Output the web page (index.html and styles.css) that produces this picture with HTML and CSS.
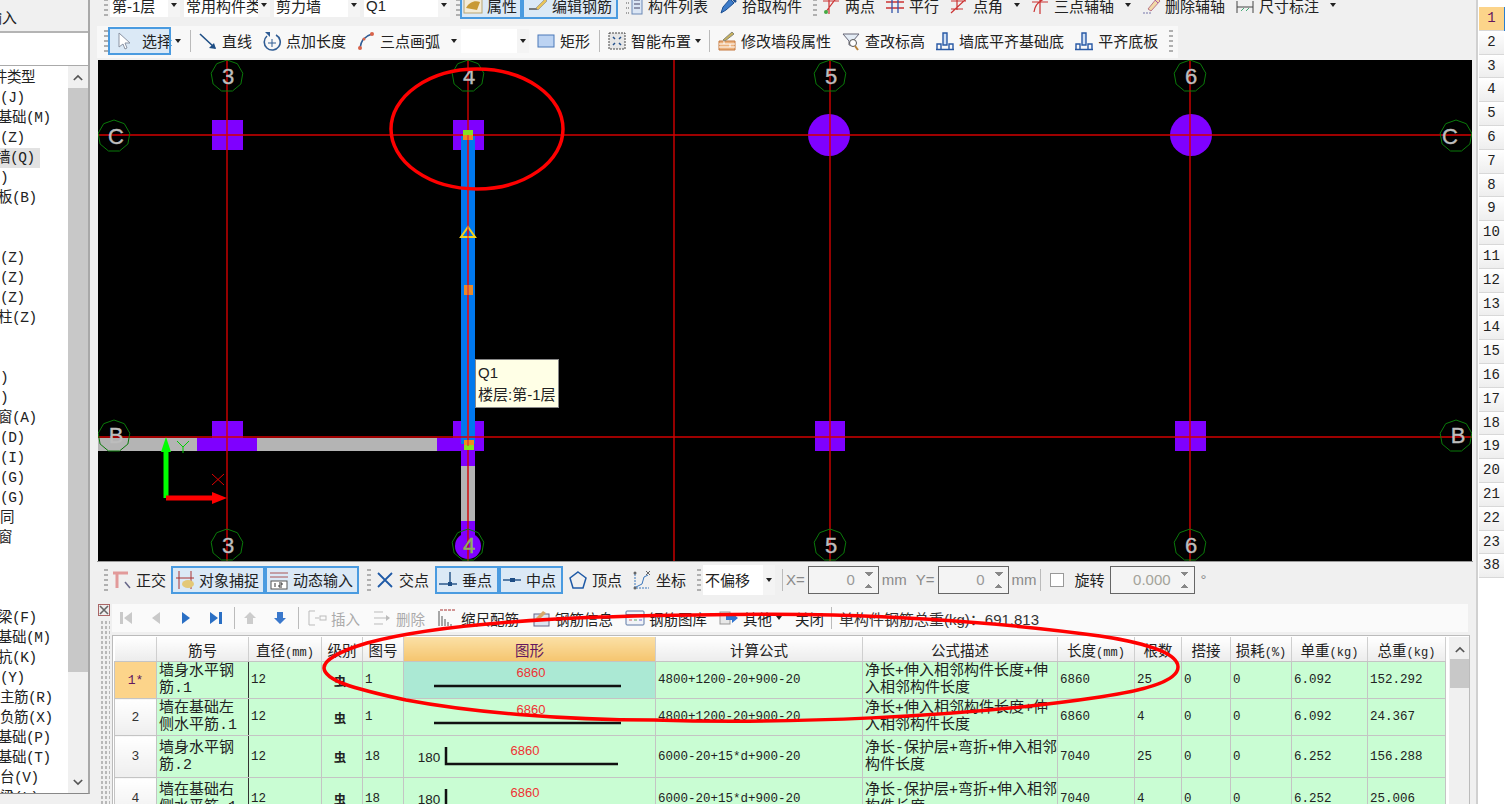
FILE: index.html
```html
<!DOCTYPE html>
<html>

<head>
    <meta charset="utf-8">
    <title>钢筋编辑</title>
    <link rel="stylesheet" href="styles.css">
</head>

<body>
    <div class="page">
        <!-- 左侧构件树 -->
        <div class="side">
            <div class="side-btn">输入</div>
            <div class="side-blank"></div>
            <div class="side-list">
                <ul class="tree">
                    <li class="cut6">件类型</li>
                    <li>(J)</li>
                    <li class="cut2">基础(M)</li>
                    <li>(Z)</li>
                    <li class="cut4 on">墙(Q)</li>
                    <li>)</li>
                    <li class="cut2">板(B)</li>
                    <li></li>
                    <li></li>
                    <li>(Z)</li>
                    <li>(Z)</li>
                    <li>(Z)</li>
                    <li class="cut2">柱(Z)</li>
                    <li></li>
                    <li></li>
                    <li>)</li>
                    <li>)</li>
                    <li class="cut2">窗(A)</li>
                    <li>(D)</li>
                    <li>(I)</li>
                    <li>(G)</li>
                    <li>(G)</li>
                    <li>同</li>
                    <li class="cut2">窗</li>
                    <li></li>
                    <li></li>
                    <li></li>
                    <li class="cut2">梁(F)</li>
                    <li class="cut2">基础(M)</li>
                    <li class="cut2">抗(K)</li>
                    <li>(Y)</li>
                    <li>主筋(R)</li>
                    <li>负筋(X)</li>
                    <li class="cut2">基础(P)</li>
                    <li class="cut2">基础(T)</li>
                    <li>台(V)</li>
                    <li>梁(L)</li>
                </ul>
                <div class="vbar">
                    <svg class="vbar-up" viewBox="0 0 12 8"><path d="M1 7l5-5 5 5" fill="none" stroke="#555" stroke-width="2"/></svg>
                    <div class="vbar-thumb"></div>
                    <svg class="vbar-down" viewBox="0 0 12 8"><path d="M1 1l5 5 5-5" fill="none" stroke="#555" stroke-width="2"/></svg>
                </div>
            </div>
        </div>

        <div class="main">
            <!-- 第一排工具条 -->
            <div class="bar bar-top">
                <i class="grip g2"></i>
                <div class="combo c70"><span>第-1层</span><b></b></div>
                <div class="combo c86"><span>常用构件类</span><b></b></div>
                <div class="combo c86"><span>剪力墙</span><b></b></div>
                <div class="combo c86"><span>Q1</span><b></b></div>
                <i class="grip g0"></i>
                <div class="tool active t-attr">
                    <svg viewBox="0 0 20 20"><rect x="1" y="2" width="18" height="16" fill="#f3ecd8" stroke="#b9a675"/><path d="M3 13c3-6 9-8 14-6l-3 8z" fill="#c89a35"/></svg>属性
                </div>
                <div class="tool active t-edit">
                    <svg viewBox="0 0 20 20"><path d="M1 14h8l9-9" fill="none" stroke="#555" stroke-width="1.5"/><path d="M8 13l9-9 2 2-9 9z" fill="#e8c45a" stroke="#888" stroke-width=".6"/></svg>编辑钢筋
                </div>
                <div class="tool">
                    <svg viewBox="0 0 20 20"><path d="M2 3h3M2 8h3M2 13h3M2 18h3" stroke="#555" stroke-dasharray="1 1"/><rect x="8" y="1" width="10" height="18" fill="#dbe6f5" stroke="#6a88b5"/><path d="M10 5h6M10 9h6M10 13h6" stroke="#446"/></svg>构件列表
                </div>
                <div class="tool">
                    <svg viewBox="0 0 20 20"><path d="M3 18l2-6 7-8 4 4-8 7z" fill="#3d7cc9" stroke="#1d4f92"/><path d="M13 2l5 5" stroke="#1d4f92" stroke-width="2.5"/></svg>拾取构件
                </div>
                <i class="grip"></i>
                <div class="tool">
                    <svg viewBox="0 0 20 20"><path d="M2 6h16M8 1v18M16 2L4 18" fill="none" stroke="#c33" stroke-width="1.2"/><circle cx="5" cy="17" r="2" fill="#4a4"/><circle cx="15" cy="3" r="2" fill="#4a4"/></svg>两点
                </div>
                <div class="tool">
                    <svg viewBox="0 0 20 20"><path d="M1 7h18M1 13h18" stroke="#c33" stroke-width="1.3"/><path d="M7 2v16M13 2v16" stroke="#35a" stroke-width="1.3"/></svg>平行
                </div>
                <div class="tool drop">
                    <svg viewBox="0 0 20 20"><path d="M2 6h15M8 1v14M2 18L17 4M2 14h12" fill="none" stroke="#c33" stroke-width="1.2"/></svg>点角<b></b>
                </div>
                <div class="tool drop">
                    <svg viewBox="0 0 20 20"><path d="M2 7h16M10 1v18M4 17c1-8 6-12 13-14" fill="none" stroke="#c33" stroke-width="1.2"/></svg>三点辅轴<b></b>
                </div>
                <div class="tool">
                    <svg viewBox="0 0 20 20"><path d="M2 18h8" stroke="#77a" stroke-dasharray="2 1"/><path d="M7 14L16 3l3 3-9 10z" fill="#f1d9a6" stroke="#b78"/><path d="M14 5l3 3" stroke="#a5a"/></svg>删除辅轴
                </div>
                <div class="tool drop">
                    <svg viewBox="0 0 20 20"><path d="M2 6v12M18 6v12M2 12h16" stroke="#444"/><path d="M6 16l3-3M11 16l3-3" stroke="#4a7"/></svg>尺寸标注<b></b>
                </div>
            </div>

            <!-- 第二排工具条 -->
            <div class="bar bar-draw">
                <div class="draw-left">
                    <i class="grip g0"></i>
                    <div class="tool active t-select">
                        <svg viewBox="0 0 20 20"><path d="M5 2v14l4-3 2 5 2-1-2-5h5z" fill="#fff" stroke="#8a93a3"/></svg>选择
                    </div>
                    <b class="caret solo"></b>
                    <i class="sep"></i>
                    <div class="tool">
                        <svg viewBox="0 0 20 20"><path d="M2 3l15 14" stroke="#1e4e85" stroke-width="1.6"/><path d="M18 18l-7-1 5-5z" fill="#1e4e85"/></svg>直线
                    </div>
                    <div class="tool">
                        <svg viewBox="0 0 20 20"><path d="M5 5a8 8 0 1 0 9-1" fill="none" stroke="#2f5c94" stroke-width="1.6"/><path d="M3 1h5v5z" fill="#2f5c94"/><path d="M10 8v8M6 12h8" stroke="#2f5c94"/></svg>点加长度
                    </div>
                    <div class="tool drop">
                        <svg viewBox="0 0 20 20"><path d="M4 17C5 9 9 5 16 3" fill="none" stroke="#2f5c94" stroke-width="1.6"/><circle cx="4" cy="17" r="2" fill="#d9634a"/><circle cx="16" cy="3" r="2" fill="#d9634a"/><circle cx="8" cy="8" r="1.5" fill="#d9634a"/></svg>三点画弧<b></b>
                    </div>
                    <div class="combo blank"><span></span><b></b></div>
                    <div class="tool">
                        <svg viewBox="0 0 20 20"><rect x="2" y="4" width="16" height="12" fill="#bcd3f2" stroke="#4a78b8"/></svg>矩形
                    </div>
                    <i class="sep"></i>
                    <div class="tool drop tight">
                        <svg viewBox="0 0 20 20"><rect x="2" y="2" width="16" height="16" fill="#e6e6e6" stroke="#444" stroke-dasharray="2 1"/><path d="M6 6l2 2M14 6l-2 2M6 14l2-2M14 14l-2-2" stroke="#24518d" stroke-width="1.5"/></svg>智能布置<b></b>
                    </div>
                    <i class="sep"></i>
                    <div class="tool">
                        <svg viewBox="0 0 20 20"><path d="M2 10h16v9H2z" fill="#ecb27e" stroke="#c5793f"/><path d="M2 13h16M2 16h16M7 10v3M13 13v3" stroke="#fff"/><path d="M6 9l9-8 2 2-9 7z" fill="#c9b25d" stroke="#887"/></svg>修改墙段属性
                    </div>
                    <div class="tool">
                        <svg viewBox="0 0 20 20"><path d="M2 3h16l-6 7v4H8v-4z" fill="#e4ecf5" stroke="#667"/><circle cx="12" cy="12" r="3.5" fill="#fff" stroke="#555"/><path d="M14 15l3 4" stroke="#b78238" stroke-width="2"/></svg>查改标高
                    </div>
                    <div class="tool">
                        <svg viewBox="0 0 20 20"><path d="M8 2h4v12H8z" fill="#cfe0f5" stroke="#2859a5" stroke-width="1.4"/><path d="M2 18v-5h4v5M14 18v-5h4v5M1 18.500h18" fill="none" stroke="#2859a5" stroke-width="1.4"/></svg>墙底平齐基础底
                    </div>
                    <div class="tool">
                        <svg viewBox="0 0 20 20"><path d="M8 2h4v12H8z" fill="#cfe0f5" stroke="#2859a5" stroke-width="1.4"/><path d="M2 18v-5h4v5M14 18v-5h4v5M1 18.500h18" fill="none" stroke="#2859a5" stroke-width="1.4"/></svg>平齐底板
                    </div>
                    <i class="grip"></i>
                </div>
            </div>

            <!-- 绘图区 -->
            <div class="canvas">
                <svg class="cad" viewBox="98 60 1374 501">
                    <defs>
                        <polygon id="gon" points="0,-16 10.300,-12.300 15.800,-2.800 13.900,8 5.500,15 -5.500,15 -13.900,8 -15.800,-2.800 -10.300,-12.300"/>
                    </defs>
                    <!-- 墙 -->
                    <rect class="wall" x="98" y="438" width="370" height="13"/>
                    <rect class="wall" x="461" y="451" width="14" height="80"/>
                    <!-- 柱 -->
                    <g class="col">
                        <rect x="212" y="120" width="31" height="30"/>
                        <rect x="453" y="120" width="31" height="30"/>
                        <circle cx="829" cy="135" r="21"/>
                        <circle cx="1191" cy="135" r="21"/>
                        <rect x="212" y="421" width="31" height="18"/>
                        <rect x="197" y="438" width="60" height="13"/>
                        <rect x="453" y="421" width="31" height="30"/>
                        <rect x="437" y="438" width="20" height="13"/>
                        <rect x="461" y="451" width="14" height="15"/>
                        <rect x="461" y="521" width="14" height="24"/>
                        <circle cx="468" cy="546" r="13"/>
                        <rect x="815" y="421" width="30" height="30"/>
                        <rect x="1175" y="421" width="31" height="30"/>
                    </g>
                    <rect x="461" y="136" width="14" height="308" fill="#0078ee"/>
                    <!-- 轴线 -->
                    <path class="axis" d="M227 60V561M468 60V561M674 60V561M830 60V561M1190 60V561M98 135H1472M98 437H1472"/>
                    <!-- 轴号 -->
                    <g class="bub">
                        <use href="#gon" x="227" y="76"/>
                        <use href="#gon" x="468" y="76"/>
                        <use href="#gon" x="830" y="76"/>
                        <use href="#gon" x="1190" y="76"/>
                        <use href="#gon" x="227" y="545"/>
                        <use href="#gon" x="468" y="545"/>
                        <use href="#gon" x="830" y="545"/>
                        <use href="#gon" x="1190" y="545"/>
                        <use href="#gon" x="114" y="136"/>
                        <use href="#gon" x="1456" y="136"/>
                        <use href="#gon" x="114" y="436"/>
                        <use href="#gon" x="1456" y="436"/>
                    </g>
                    <g class="bub-txt">
                        <text x="228" y="84">3</text>
                        <text x="469" y="84">4</text>
                        <text x="831" y="84">5</text>
                        <text x="1191" y="84">6</text>
                        <text x="228" y="553">3</text>
                        <text x="469" y="553" class="dim">4</text>
                        <text x="831" y="553">5</text>
                        <text x="1191" y="553">6</text>
                        <text x="116" y="144">C</text>
                        <text x="1450" y="144">C</text>
                        <text x="116" y="443">B</text>
                        <text x="1458" y="443">B</text>
                    </g>
                    <!-- 夹点 -->
                    <rect x="463" y="130" width="10" height="5" fill="#86e020"/>
                    <rect x="463" y="135" width="10" height="5" fill="#f08a1c"/>
                    <rect x="464" y="285" width="9" height="10" fill="#e8892a"/>
                    <path d="M468 227l7 10h-14z" fill="none" stroke="#f2d21c" stroke-width="2"/>
                    <rect x="464" y="440" width="10" height="5" fill="#f08a1c"/>
                    <rect x="464" y="445" width="10" height="5" fill="#86e020"/>
                    <path d="M468 135V446" stroke="#d9183a" stroke-width="1"/>
                    <!-- 坐标系 -->
                    <path d="M166 498V448" stroke="#00ff00" stroke-width="5"/>
                    <path d="M166 437l-5 15h10z" fill="#00ff00"/>
                    <path d="M166 498H213" stroke="#ff0000" stroke-width="5"/>
                    <path d="M227 498l-15-6v12z" fill="#ff0000"/>
                    <path d="M177 441l6 6 6-6M183 447v6" fill="none" stroke="#00d000"/>
                    <path d="M212 474l12 11M224 474l-12 11" stroke="#e00000"/>
                </svg>
                <div class="tip">Q1<br>楼层:第-1层</div>
            </div>

            <!-- 捕捉工具条 -->
            <div class="bar bar-snap">
                <i class="grip"></i>
                <div class="tool m4">
                    <svg viewBox="0 0 20 20"><path d="M1 3h15M5 3v15" stroke="#e29a9a" stroke-width="3"/><path d="M13 12l5 6" stroke="#668" stroke-width="1.5"/></svg>正交
                </div>
                <div class="tool active t-snap">
                    <svg viewBox="0 0 20 20"><path d="M4 1v18M16 1v18M1 8h18" stroke="#a33"/><ellipse cx="13" cy="14" rx="6" ry="4" fill="#e3c877"/></svg>对象捕捉
                </div>
                <div class="tool active t-snap m6">
                    <svg viewBox="0 0 20 20"><path d="M1 3h18M1 7h18" stroke="#a55"/><rect x="2" y="11" width="16" height="8" fill="#fff" stroke="#555"/><path d="M6 13v4M10 13h3v2h-3v2h3" fill="none" stroke="#333"/></svg>动态输入
                </div>
                <i class="grip"></i>
                <div class="tool m5">
                    <svg viewBox="0 0 20 20"><path d="M3 3l14 14M17 3L3 17" stroke="#1f5aa6" stroke-width="1.8"/></svg>交点
                </div>
                <div class="tool active t-pt">
                    <svg viewBox="0 0 20 20"><path d="M1 14h18" stroke="#1e4e85" stroke-width="1.4"/><path d="M12 2v12" stroke="#1e4e85" stroke-width="1.4"/><rect x="10" y="12" width="4" height="4" fill="#1e4e85"/></svg>垂点
                </div>
                <div class="tool active t-pt m4">
                    <svg viewBox="0 0 20 20"><path d="M1 10h18" stroke="#1e4e85" stroke-width="1.4"/><rect x="8" y="8" width="5" height="4" fill="#1e4e85"/></svg>中点
                </div>
                <div class="tool">
                    <svg viewBox="0 0 20 20"><path d="M10 2l8 6-3 10H5L2 8z" fill="none" stroke="#1f5aa6" stroke-width="1.5"/></svg>顶点
                </div>
                <div class="tool">
                    <svg viewBox="0 0 20 20"><path d="M3 4v14h14" fill="none" stroke="#3a76bb" stroke-dasharray="2 1"/><path d="M4 17l6-3 2-7 4-2" fill="none" stroke="#3a76bb"/><path d="M14 1l4 4M18 1l-4 4" stroke="#666"/><circle cx="3" cy="3" r="1.500" fill="#666"/><circle cx="3" cy="18" r="1.500" fill="#666"/></svg>坐标
                </div>
                <i class="grip g2"></i>
                <div class="combo c72"><span>不偏移</span><b></b></div>
                <i class="sep"></i>
                <span class="dim-txt lx">X=</span>
                <div class="spin s71"><span>0</span><em></em></div>
                <span class="dim-txt">mm</span>
                <span class="dim-txt ly">Y=</span>
                <div class="spin s71"><span>0</span><em></em></div>
                <span class="dim-txt">mm</span>
                <i class="sep"></i>
                <i class="check"></i>
                <span class="rot">旋转</span>
                <div class="spin s85"><span class="amber">0.000</span><em></em></div>
                <span class="dim-txt deg">°</span>
            </div>

            <!-- 钢筋明细 -->
            <div class="detail">
                <div class="detail-grip">
                    <svg class="x-ic" viewBox="0 0 12 12"><rect x=".5" y=".5" width="11" height="11" fill="#eee" stroke="#a66"/><path d="M2 2l8 8M10 2l-8 8" stroke="#666" stroke-width="1.6"/></svg>
                    <div class="dots"></div>
                </div>
                <div class="detail-body">
                    <div class="bar-rebar">
                        <svg class="nav" viewBox="0 0 16 16"><path d="M2 2h3v12H2zM14 2v12L6 8z" fill="#c9c9c9"/></svg>
                        <svg class="nav" viewBox="0 0 16 16"><path d="M12 2v12L4 8z" fill="#c9c9c9"/></svg>
                        <svg class="nav" viewBox="0 0 16 16"><path d="M4 2v12l8-6z" fill="#2a6fc4"/></svg>
                        <svg class="nav" viewBox="0 0 16 16"><path d="M2 2v12l8-6zM11 2h3v12h-3z" fill="#2a6fc4"/></svg>
                        <i class="sep"></i>
                        <svg class="nav" viewBox="0 0 16 16"><path d="M8 2l6 6h-3v6H5V8H2z" fill="#ccc"/></svg>
                        <svg class="nav" viewBox="0 0 16 16"><path d="M8 14l6-6h-3V2H5v6H2z" fill="#3a78cc"/></svg>
                        <i class="sep"></i>
                        <div class="tool off"><svg viewBox="0 0 20 20"><path d="M2 3h6M2 17h6M2 3v14M8 10h4" stroke="#bbb" fill="none"/><rect x="13" y="8" width="6" height="4" fill="none" stroke="#bbb"/></svg>插入</div>
                        <div class="tool off"><svg viewBox="0 0 20 20"><path d="M2 4h9M2 10h12M2 16h9" stroke="#bbb"/><path d="M14 7l4 3-4 3z" fill="#bbb"/></svg>删除</div>
                        <div class="tool"><svg viewBox="0 0 20 20"><path d="M2 3v15M5 8v10M8 11v7M11 14v4M14 16v2" stroke="#555"/><path d="M3 2h15" stroke="#a33" stroke-dasharray="3 1"/></svg>缩尺配筋</div>
                        <div class="tool"><svg viewBox="0 0 20 20"><rect x="3" y="6" width="15" height="12" fill="#dbe5f2" stroke="#668"/><path d="M4 11l8-8 3 2-8 8z" fill="#d8a86a"/></svg>钢筋信息</div>
                        <div class="tool"><svg viewBox="0 0 20 20"><rect x="1" y="3" width="18" height="14" rx="1" fill="#f1f3f8" stroke="#5c78a6"/><path d="M1 7h18" stroke="#5c78a6" stroke-width="2"/><path d="M4 12h3" stroke="#c66"/><path d="M9 12h3" stroke="#6a6"/><path d="M14 12h3" stroke="#66c"/></svg>钢筋图库</div>
                        <div class="tool drop tight"><svg viewBox="0 0 20 20"><rect x="1" y="4" width="10" height="12" fill="#e8e8e8" stroke="#999"/><path d="M7 8h6V5l6 5-6 5v-3H7z" fill="#2f74d0"/></svg>其他<b></b></div>
                        <div class="tool">关闭</div>
                        <i class="sep"></i>
                        <span class="total">单构件钢筋总重(kg)：691.813</span>
                    </div>
                    <div class="grid-wrap">
                        <table class="rebar">
                            <colgroup>
                                <col class="c0"><col class="c1"><col class="c2"><col class="c3"><col class="c4"><col class="c5"><col class="c6"><col class="c7"><col class="c8"><col class="c9"><col class="c10"><col class="c11"><col class="c12"><col class="c13">
                            </colgroup>
                            <thead>
                                <tr>
                                    <th></th><th>筋号</th><th>直径<small>(mm)</small></th><th>级别</th><th>图号</th><th class="cur">图形</th><th>计算公式</th><th>公式描述</th><th>长度<small>(mm)</small></th><th>根数</th><th>搭接</th><th>损耗<small>(%)</small></th><th>单重<small>(kg)</small></th><th>总重<small>(kg)</small></th>
                                </tr>
                            </thead>
                            <tbody>
                                <tr class="r37">
                                    <td class="no sel">1*</td>
                                    <td class="name">墙身水平钢<br>筋.1</td>
                                    <td>12</td><td class="mid">虫</td><td>1</td>
                                    <td class="shape picked"><svg viewBox="0 0 251 36"><text x="127" y="15">6860</text><path d="M30 24H217" stroke="#111" stroke-width="2.500"/></svg></td>
                                    <td>4800+1200-20+900-20</td>
                                    <td class="name">净长+伸入相邻构件长度+伸<br>入相邻构件长度</td>
                                    <td>6860</td><td>25</td><td>0</td><td>0</td><td>6.092</td><td>152.292</td>
                                </tr>
                                <tr class="r37">
                                    <td class="no">2</td>
                                    <td class="name">墙在基础左<br>侧水平筋.1</td>
                                    <td>12</td><td class="mid">虫</td><td>1</td>
                                    <td class="shape"><svg viewBox="0 0 251 36"><text x="127" y="15">6860</text><path d="M30 24H217" stroke="#111" stroke-width="2.500"/></svg></td>
                                    <td>4800+1200-20+900-20</td>
                                    <td class="name">净长+伸入相邻构件长度+伸<br>入相邻构件长度</td>
                                    <td>6860</td><td>4</td><td>0</td><td>0</td><td>6.092</td><td>24.367</td>
                                </tr>
                                <tr class="r42">
                                    <td class="no">3</td>
                                    <td class="name">墙身水平钢<br>筋.2</td>
                                    <td>12</td><td class="mid">虫</td><td>18</td>
                                    <td class="shape"><svg viewBox="0 0 251 41"><text x="121" y="19">6860</text><text class="len" x="25" y="26">180</text><path d="M42 11V28H214" fill="none" stroke="#111" stroke-width="2.500"/></svg></td>
                                    <td>6000-20+15*d+900-20</td>
                                    <td class="name">净长-保护层+弯折+伸入相邻<br>构件长度</td>
                                    <td>7040</td><td>25</td><td>0</td><td>0</td><td>6.252</td><td>156.288</td>
                                </tr>
                                <tr class="r42">
                                    <td class="no">4</td>
                                    <td class="name">墙在基础右<br>侧水平筋.1</td>
                                    <td>12</td><td class="mid">虫</td><td>18</td>
                                    <td class="shape"><svg viewBox="0 0 251 41"><text x="121" y="19">6860</text><text class="len" x="25" y="26">180</text><path d="M42 11V28H214" fill="none" stroke="#111" stroke-width="2.500"/></svg></td>
                                    <td>6000-20+15*d+900-20</td>
                                    <td class="name">净长-保护层+弯折+伸入相邻<br>构件长度</td>
                                    <td>7040</td><td>4</td><td>0</td><td>0</td><td>6.252</td><td>25.006</td>
                                </tr>
                            </tbody>
                        </table>
                        <div class="gbar">
                            <svg viewBox="0 0 12 8"><path d="M1 7l5-5 5 5" fill="none" stroke="#555" stroke-width="2"/></svg>
                            <div class="gbar-thumb"></div>
                        </div>
                    </div>
                </div>
            </div>
        </div>

        <!-- 右侧楼层页签 -->
        <div class="rail">
            <div class="tab on">1</div>
            <div class="tab">2</div>
            <div class="tab">3</div>
            <div class="tab">4</div>
            <div class="tab">5</div>
            <div class="tab">6</div>
            <div class="tab">7</div>
            <div class="tab">8</div>
            <div class="tab">9</div>
            <div class="tab">10</div>
            <div class="tab">11</div>
            <div class="tab">12</div>
            <div class="tab">13</div>
            <div class="tab">14</div>
            <div class="tab">15</div>
            <div class="tab">16</div>
            <div class="tab">17</div>
            <div class="tab">18</div>
            <div class="tab">19</div>
            <div class="tab">20</div>
            <div class="tab">21</div>
            <div class="tab">22</div>
            <div class="tab">23</div>
            <div class="tab">38</div>
        </div>

        <!-- 手画的红圈 -->
        <svg class="marks" viewBox="0 0 1505 804">
            <ellipse cx="477" cy="129" rx="86" ry="60"/>
            <path d="M600 617C520 620 430 626 367 643C340 651 324 660 324 668C325 680 350 688 406 700C470 712 560 720 654 720C780 724 960 718 1100 697C1140 691 1178 682 1178 667C1178 652 1140 642 1100 636C1000 622 900 617 833 615C750 613 680 615 600 617Z"/>
        </svg>
    </div>
</body>

</html>
```

FILE: styles.css
```css
html,
body {
    margin: 0;
    padding: 0;
    height: 100%;
    overflow: hidden;
}

body {
    background: #f0f0f0;
    color: #222;
    font-family: "Liberation Sans", "Noto Sans CJK SC", sans-serif;
    font-size: 15px;
}

.page {
    position: relative;
    display: flex;
    width: 1505px;
    height: 804px;
    overflow: hidden;
}

/* 左侧 */
.side {
    width: 90px;
    flex: none;
    display: flex;
    flex-direction: column;
    border-right: 2px solid #a8a8a8;
    border-bottom: 1px solid #888;
    box-sizing: border-box;
    height: 794px;
    background: #fff;
}

.side-btn {
    height: 31px;
    line-height: 36px;
    margin-left: -13px;
    background: #f0f0f0;
    border-bottom: 2px solid #b4b4b4;
}

.side-blank {
    height: 32px;
    border-bottom: 1px solid #aaa;
}

.side-list {
    flex: 1;
    display: flex;
    overflow: hidden;
}

.tree {
    list-style: none;
    margin: 0;
    padding: 2px 0 0;
    flex: 1;
    min-width: 0;
    overflow: hidden;
    font-family: "Liberation Mono", "Noto Sans CJK SC", monospace;
    font-size: 14.500px;
    letter-spacing: -0.500px;
    line-height: 20px;
    white-space: nowrap;
}

.tree li {
    height: 20px;
}

.tree .cut2 {
    text-indent: -2px;
}

.tree .cut4 {
    text-indent: -4px;
}

.tree .cut6 {
    text-indent: -7px;
}

.tree .on {
    background: #e2e2e2;
    width: 40px;
}

.vbar {
    width: 20px;
    flex: none;
    background: #f0f0f0;
    position: relative;
}

.vbar-up {
    display: block;
    width: 10px;
    height: 7px;
    margin: 8px auto 7px;
}

.vbar-thumb {
    height: 584px;
    background: #c8c8c8;
}

.vbar-down {
    position: absolute;
    left: 5px;
    bottom: 7px;
    width: 10px;
    height: 7px;
}

/* 中间 */
.main {
    width: 1376px;
    margin-left: 7px;
    flex: none;
    display: flex;
    flex-direction: column;
    position: relative;
}

.bar {
    display: flex;
    align-items: center;
    white-space: nowrap;
    flex: none;
}

.bar-top {
    height: 24px;
    margin-top: -7px;
    padding-left: 5px;
}

.bar-draw {
    align-items: flex-start;
    height: 34px;
    margin-top: 9px;
}

.draw-left {
    display: flex;
    align-items: center;
    height: 32px;
    width: 1081px;
    padding: 0 0 3px 5px;
    box-sizing: border-box;
    background: #f8f8f8;
}

.grip {
    display: block;
    flex: none;
    width: 4px;
    height: 22px;
    margin: 0 3px 0 2px;
    background: repeating-linear-gradient(#b0b0b0 0, #b0b0b0 2px, transparent 2px, transparent 5px);
}

.grip.g0 {
    margin-right: 0;
}

.grip.g2 {
    margin-right: 2px;
}

.sep {
    display: block;
    flex: none;
    width: 1px;
    height: 22px;
    margin: 0 6px 0 0;
    background: #bbb;
}

.tool {
    display: flex;
    align-items: center;
    gap: 4px;
    flex: none;
    height: 26px;
    padding: 0 1px;
    margin-right: 8px;
}

.tool svg {
    width: 20px;
    height: 20px;
    flex: none;
}

.tool.off {
    color: #aaa;
}

.tool.active {
    box-sizing: border-box;
    height: 28px;
    margin-right: 0;
    background: #dbe9f6;
    outline: 2px solid #4a9be0;
    outline-offset: -2px;
}

.tool.t-attr {
    width: 62px;
    padding: 0 3px;
}

.tool.t-edit {
    width: 96px;
    margin-right: 5px;
    padding: 0 6px;
}

.tool.t-select {
    width: 63px;
    gap: 8px;
    padding: 0 6px;
}

.tool.t-snap {
    width: 94px;
    padding: 0 4px;
}

.tool.t-pt {
    width: 64px;
    padding: 0 3px;
}

.tool.m4 {
    margin-right: 4px;
}

.tool.m5 {
    margin-right: 5px;
}

.tool.m6 {
    margin-right: 6px;
}

.drop b,
.caret,
.combo b::after {
    display: block;
    width: 0;
    height: 0;
    border: 3.500px solid transparent;
    border-top: 4px solid #222;
    border-bottom: 0;
    content: "";
}

.drop b {
    margin-left: 7px;
}

.tool.tight {
    margin-right: 7px;
}

.drop.tight b {
    margin-left: 0;
}

.caret.solo {
    flex: none;
    margin: 0 9px 0 4px;
}

.combo {
    display: flex;
    align-items: center;
    flex: none;
    height: 24px;
    background: #fff;
    margin-right: 4px;
    overflow: hidden;
    box-sizing: border-box;
    padding-left: 2px;
}

.combo span {
    flex: 1;
    overflow: hidden;
    white-space: nowrap;
}

.combo b {
    display: flex;
    align-items: center;
    justify-content: center;
    width: 12px;
    height: 100%;
    background: #f4f4f4;
    flex: none;
}

.c70 {
    width: 70px;
}

.c72 {
    width: 72px;
    height: 30px;
}

.c86 {
    width: 86px;
}

.combo.blank {
    width: 68px;
    margin-right: 6px;
    margin-left: -5px;
}

/* 绘图区 */
.canvas {
    position: relative;
    flex: none;
    width: 1374px;
    height: 501px;
    margin-left: 1px;
    background: #000;
}

.cad {
    display: block;
    width: 1374px;
    height: 501px;
}

.wall {
    fill: #b4b4b4;
}

.col {
    fill: #7f00ff;
}

.axis {
    fill: none;
    stroke: #d20000;
    stroke-width: 1.400;
}

.bub {
    fill: none;
    stroke: #0a7a0a;
    stroke-width: 1;
}

.bub-txt {
    fill: #bdbdbd;
    stroke: #bdbdbd;
    stroke-width: .4;
    font-family: "Liberation Sans", sans-serif;
    font-size: 22px;
    text-anchor: middle;
}

.bub-txt .dim {
    fill: #8fb05a;
    stroke: #8fb05a;
}

.tip {
    position: absolute;
    left: 377px;
    top: 299px;
    width: 84px;
    height: 49px;
    box-sizing: border-box;
    padding: 2px 2px;
    font-size: 15px;
    line-height: 22px;
    white-space: nowrap;
    background: #ffffe6;
    border: 1px solid #888;
}

/* 捕捉条 */
.bar-snap {
    height: 35px;
    padding: 0 0 3px 5px;
    font-size: 15px;
    border-top: 1px solid #999;
}

.bar-snap .sep {
    margin: 0 3px;
}

.dim-txt {
    color: #8a8a8a;
    flex: none;
}

.lx {
    margin-right: 3px;
}

.ly {
    margin: 0 3px 0 9px;
}

.deg {
    margin-left: 3px;
}

.spin {
    position: relative;
    display: flex;
    justify-content: flex-end;
    align-items: center;
    height: 28px;
    box-sizing: border-box;
    margin-right: 3px;
    padding-right: 23px;
    border: 1px solid #666;
    background: #f4f4f4;
    color: #999;
    flex: none;
}

.spin em {
    position: absolute;
    right: 5px;
    top: 5px;
    width: 8px;
    height: 16px;
    background:
        linear-gradient(45deg, transparent 50%, #888 50%) left top / 4px 4px no-repeat,
        linear-gradient(-45deg, transparent 50%, #888 50%) right top / 4px 4px no-repeat,
        linear-gradient(135deg, transparent 50%, #888 50%) left bottom / 4px 4px no-repeat,
        linear-gradient(-135deg, transparent 50%, #888 50%) right bottom / 4px 4px no-repeat;
}

.s71 {
    width: 71px;
}

.s85 {
    width: 85px;
}

.amber {
    color: #a3a39a;
}

.check {
    display: block;
    flex: none;
    width: 12px;
    height: 12px;
    margin: 0 11px 0 6px;
    border: 1px solid #999;
    background: #fff;
}

.rot {
    margin-right: 5px;
    flex: none;
}

/* 明细 */
.detail {
    display: flex;
    flex: 1;
    min-height: 0;
    margin-left: 1px;
}

.detail-grip {
    width: 14px;
    flex: none;
    padding-top: 4px;
}

.x-ic {
    display: block;
    width: 12px;
    height: 12px;
}

.dots {
    height: 190px;
    width: 10px;
    margin: 4px 0 0 2px;
    background: radial-gradient(#b8b8b8 1px, transparent 1.200px) 0 0 / 4px 5px;
}

.detail-body {
    flex: 1;
    min-width: 0;
    margin-top: 4px;
}

.bar-rebar {
    display: flex;
    align-items: center;
    height: 28px;
    padding-left: 6px;
    background: #fafafa;
    white-space: nowrap;
    margin-right: 5px;
    font-size: 14.500px;
}

.bar-rebar .sep {
    margin: 0 7px 0 -4px;
}

.bar-rebar .tool {
    margin-right: 10px;
}

.bar-rebar .tool.tight {
    margin-right: 11px;
}

.nav {
    width: 16px;
    height: 16px;
    flex: none;
    margin-right: 14px;
}

.total {
    color: #333;
    font-size: 15px;
}

.grid-wrap {
    display: flex;
    margin-top: 3px;
    margin-right: 3px;
    padding: 1px;
    height: 170px;
    overflow: hidden;
    background: #fff;
    border: 1px solid #bbb;
    border-bottom: 0;
}

.rebar {
    flex: none;
    table-layout: fixed;
    border-collapse: collapse;
    width: 1331px;
    font-family: "Liberation Mono", "Noto Sans CJK SC", monospace;
    font-size: 12.500px;
}

.c0 { width: 42px; }
.c1 { width: 92px; }
.c2 { width: 73px; }
.c3 { width: 41px; }
.c4 { width: 41px; }
.c5 { width: 252px; }
.c6 { width: 207px; }
.c7 { width: 195px; }
.c8 { width: 77px; }
.c9 { width: 47px; }
.c10 { width: 49px; }
.c11 { width: 61px; }
.c12 { width: 76px; }
.c13 { width: 78px; }

.rebar th {
    height: 24px;
    padding: 0;
    font-size: 14.500px;
    font-weight: normal;
    background: linear-gradient(#fff, #ececec);
    border-right: 1px solid #cfcfcf;
    border-bottom: 1px solid #c4c4c4;
}

.rebar th small {
    font-size: 12px;
}

.rebar th.cur {
    color: #63175f;
    background: linear-gradient(#fbe0a6, #f5c56f);
}

.rebar td {
    padding: 0 0 0 2px;
    overflow: hidden;
    white-space: nowrap;
    background: #c9fdd3;
    border: 1px solid #c4c4c4;
    border-top: 0;
}

.r37 td {
    height: 36px;
}

.r42 td {
    height: 41px;
}

.rebar .name {
    font-size: 15px;
    line-height: 17px;
}

.rebar td:nth-child(2) {
    border-right: 1px solid #333;
}

.rebar .mid,
.rebar .no {
    text-align: center;
    padding-left: 0;
}

.rebar .mid {
    padding-right: 4px;
    font-weight: bold;
}

.rebar .no {
    color: #333;
    font-size: 13px;
    background: linear-gradient(#fff, #eee);
}

.rebar .no.sel {
    color: #63175f;
    background: #fcd48a;
}

.rebar .shape {
    padding: 0;
}

.rebar .shape svg {
    display: block;
    width: 251px;
}

.rebar .shape text {
    fill: #ee3333;
    font-family: "Liberation Sans", sans-serif;
    font-size: 13px;
    text-anchor: middle;
}

.rebar .shape text.len {
    fill: #222;
    font-size: 13.500px;
}

.rebar .picked {
    background: #abe9d4;
}

.gbar {
    width: 21px;
    flex: none;
    margin-left: 3px;
    background: #f0f0f0;
}

.gbar svg {
    display: block;
    width: 10px;
    height: 7px;
    margin: 9px auto 6px;
}

.gbar-thumb {
    height: 29px;
    margin: 0 1px;
    background: #c8c8c8;
}

/* 右侧页签 */
.rail {
    width: 29px;
    margin-left: 3px;
    flex: none;
    background: #fff;
    border-left: 2px solid #d0d0d0;
    box-sizing: border-box;
    padding: 7px 0 0 1px;
}

.tab {
    height: 23.800px;
    width: 25px;
    line-height: 23px;
    box-sizing: border-box;
    text-align: center;
    font-family: "Liberation Mono", monospace;
    font-size: 14px;
    background: linear-gradient(#fff, #eee);
    border-bottom: 1px solid #d8d8d8;
}

.tab.on {
    color: #63175f;
    background: #fcd48a;
    box-shadow: 2px 0 0 #2a7fd0;
}

/* 红圈 */
.marks {
    position: absolute;
    left: 0;
    top: 0;
    width: 1505px;
    height: 804px;
    pointer-events: none;
    fill: none;
    stroke: #ff0000;
    stroke-width: 3.500;
}
```
